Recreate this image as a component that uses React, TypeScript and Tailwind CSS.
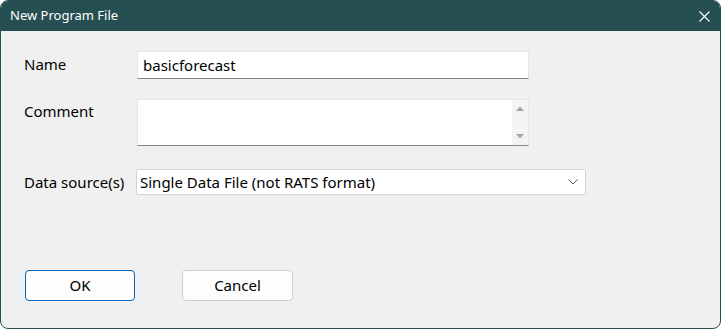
import React from 'react';

const font = { fontFamily: '"Noto Sans", "Open Sans", sans-serif' };

function Label({ children, h = 'h-[27px]' }: { children: React.ReactNode; h?: string }) {
  return <div className={`w-[113px] shrink-0 ${h} flex items-center text-[15px] text-black`}>{children}</div>;
}

export default function App() {
  return (
    <div className="w-[722px] h-[329px] bg-white">
      <div
        className="w-[721px] h-[329px] border border-[#254f50] rounded-[8px] overflow-hidden flex flex-col bg-[#f0f0f0]"
        style={font}
      >
        {/* タイトルバー */}
        <div className="h-[30px] shrink-0 bg-[#254f50] flex items-center justify-between pl-[9px] pr-[9px]">
          <span className="text-[13px] text-white">New Program File</span>
          <svg width="11" height="11" viewBox="0 0 11 11" className="mr-[1px]">
            <path d="M0.5 0.5 L10.5 10.5 M10.5 0.5 L0.5 10.5" stroke="white" strokeWidth="1.1" />
          </svg>
        </div>

        <div className="flex-1 flex flex-col pl-[23px]">
          {/* Name */}
          <div className="flex mt-[20px]">
            <Label>Name</Label>
            <div className="w-[392px] h-[28px] bg-white border border-[#e6e6e6] border-b-[#868686] flex items-center pl-[5px] text-[15px] text-black">
              basicforecast
            </div>
          </div>

          {/* Comment */}
          <div className="flex mt-[20px]">
            <Label h="h-[25px]">Comment</Label>
            <div className="w-[392px] h-[47px] bg-white border border-[#e6e6e6] border-b-[#868686] flex justify-end">
              <div className="w-[16px] h-full bg-[#f4f4f4] flex flex-col items-center justify-between py-[6px]">
                <svg width="8" height="6" viewBox="0 0 8 6"><path d="M0 5 L4 0.5 L8 5 Z" fill="#a3a3a3" /></svg>
                <svg width="8" height="6" viewBox="0 0 8 6"><path d="M0 1 L4 5.5 L8 1 Z" fill="#a3a3a3" /></svg>
              </div>
            </div>
          </div>

          {/* Data source */}
          <div className="flex mt-[23px] items-center">
            <div className="w-[112px] shrink-0 text-[15px] text-black">Data source(s)</div>
            <div className="w-[450px] h-[26px] bg-white border border-[#d4d4d4] rounded-[2px] flex items-center justify-between pl-[3px] pr-[7px] text-[15px] text-black">
              <span>Single Data File (not RATS format)</span>
              <svg width="10" height="6" viewBox="0 0 10 6"><path d="M0.5 0.5 L5 5 L9.5 0.5" stroke="#555" strokeWidth="1" fill="none" /></svg>
            </div>
          </div>

          {/* ボタン */}
          <div className="flex mt-[75px] gap-[47px] pl-[1px]">
            <button className="w-[110px] h-[31px] bg-[#fdfdfd] border border-[#0067c0] rounded-[4px] text-[15px] text-black">
              OK
            </button>
            <button className="w-[111px] h-[31px] bg-[#fdfdfd] border border-[#d0d0d0] rounded-[4px] text-[15px] text-black">
              Cancel
            </button>
          </div>
        </div>
      </div>
    </div>
  );
}
